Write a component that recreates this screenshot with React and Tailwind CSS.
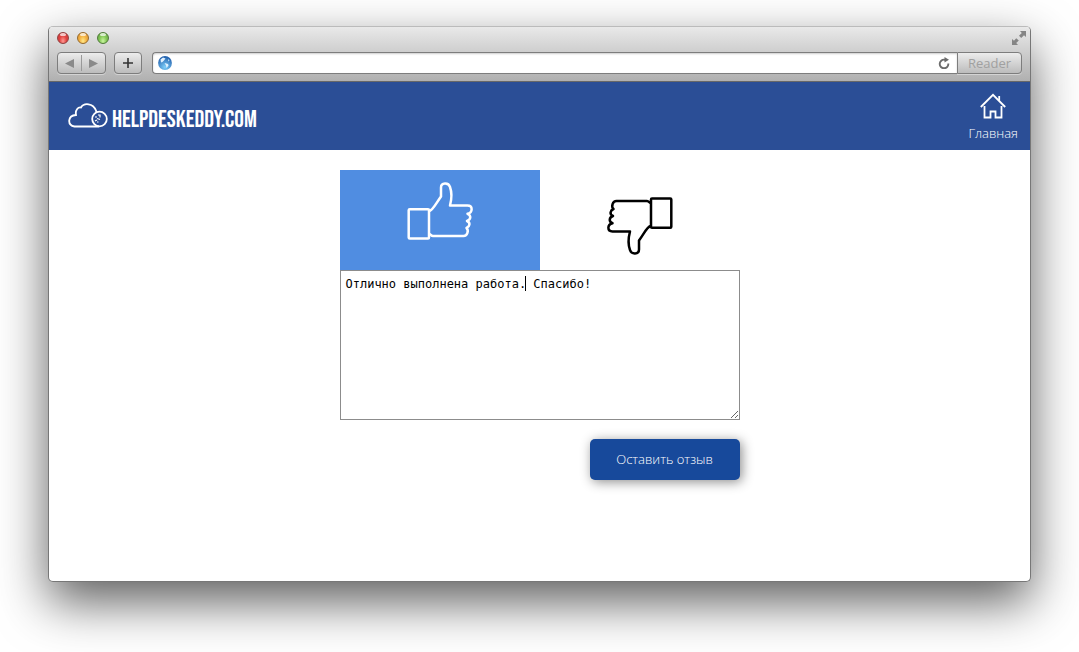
import { useState } from 'react';

const lights = [
  { name: 'Close', color: 'border-[#8f3f3f] bg-radial-[at_50%_80%] from-[#ff9a94] via-[#e0413f] to-[#c93a3a]' },
  { name: 'Minimize', color: 'border-[#94692c] bg-radial-[at_50%_80%] from-[#ffe98a] via-[#f3b040] to-[#dd9434]' },
  { name: 'Zoom', color: 'border-[#4f7a3a] bg-radial-[at_50%_80%] from-[#c9f5a0] via-[#83c755] to-[#65a344]' },
];

const chromeButton = 'border border-[#7d7d7d] bg-linear-to-b from-[#ececec] to-[#bcbcbc] shadow-[0_1px_0_rgba(255,255,255,0.4)]';

function ThumbIcon({ className }) {
  return (
    <svg viewBox="0 0 66 58" width="66" height="58" fill="none" stroke="currentColor" strokeWidth="2.5" strokeLinejoin="round" strokeLinecap="round" className={className}>
      <rect x="1.7" y="27.2" width="20.300" height="29.200" rx="1" />
      <path d="M22.500 29 C26 28 28 23 34 14.500 V5.500 C34 0.500 41.500 0.200 43 5 C45 10.500 45 16 43 23.500 H60.500 C66 23.500 66 30.500 60.500 31.800 C64.500 33.500 64 37.500 60 39 C63.800 40.500 62.800 44.500 59.500 46 C62 48.500 60.500 54 56.500 54 H26 C24.500 54 23.500 52.500 22.500 52" />
    </svg>
  );
}

function CloudLogo() {
  return (
    <svg viewBox="0 0 40 26" width="40" height="26" fill="none" stroke="white" strokeWidth="1.8" aria-hidden="true">
      <path d="M31 23.500 H6.500 C-1 22 -0.500 12.500 8 12 C7 7 10 4 13 4.500 C16 -0.500 25 0 28 7.500 L28.500 9.500" />
      <circle cx="31.500" cy="16" r="7.300" />
      <path d="M27 14 h2 M30 12 h1.500 M27 18 l2 -1 M29 15.500 l3 1 M32 14.500 v-3 M29 19 h1.500" strokeWidth="1.200" />
    </svg>
  );
}

function HomeIcon() {
  return (
    <svg viewBox="0 0 26 26" width="26" height="26" fill="none" stroke="white" strokeWidth="1.800" aria-hidden="true">
      <path d="M0.800 14 L13 1.800 L25.200 14" />
      <path d="M19.200 7.500 V3" />
      <path d="M4.500 13 V24.500 H10.500 V18.500 H15.500 V24.500 H21.500 V13" />
    </svg>
  );
}

function Globe() {
  return (
    <svg viewBox="0 0 14 14" width="14" height="14" className="flex-none" aria-hidden="true">
      <defs>
        <radialGradient id="globe" cx="50%" cy="80%" r="75%">
          <stop offset="0" stopColor="#7fd0fb" />
          <stop offset="1" stopColor="#2361ad" />
        </radialGradient>
      </defs>
      <circle cx="7" cy="7" r="6.900" fill="url(#globe)" />
      <path d="M2.500 3.500 L5 1.500 L7.500 2.500 L6 4.500 L4.500 6 L3 6.500 Z M6.500 7 L10 8 L10.500 9.500 L8.500 12 L8 9.500 Z M10 3 L11.500 4.500 L10.500 5.500 Z" fill="#e0f1ff" />
    </svg>
  );
}

function BrowserBar() {
  return (
    <div className="rounded-t-[4px] border-b border-[#686868] bg-linear-to-b from-[#e9e9e9] to-[#b0b0b0] px-2 pt-[5px] pb-[7px]">
      <div className="flex h-3 items-center justify-between">
        <div className="flex gap-2">
          {lights.map(({ name, color }) => (
            <button key={name} type="button" aria-label={name} className={`relative h-3 w-3 overflow-hidden rounded-full border ${color}`}>
              <span className="absolute inset-x-[2px] top-0 h-[3px] rounded-full bg-white/70" />
            </button>
          ))}
        </div>
        <button type="button" aria-label="Full screen" className="-mr-1 text-[#858585]">
          <svg viewBox="0 0 14 14" width="14" height="14" fill="currentColor">
            <path d="M8 0 H14 V6 L12 4.200 L9.200 7 L7 4.800 L9.800 2 Z" />
            <path d="M6 14 H0 V8 L2 9.800 L4.200 7.200 L6.800 9.600 L4.200 12 Z" />
          </svg>
        </button>
      </div>

      <div className="mt-2 flex h-[22px]">
        <div className={`flex w-[49px] items-center rounded-[4px] text-[#8a8a8a] ${chromeButton}`}>
          <button type="button" aria-label="Back" className="flex flex-1 justify-center">
            <svg viewBox="0 0 8 8" width="9" height="9" fill="currentColor"><path d="M0 4 L8 0 V8 Z" /></svg>
          </button>
          <span className="h-4 w-px bg-[#999]" />
          <button type="button" aria-label="Forward" className="flex flex-1 justify-center">
            <svg viewBox="0 0 8 8" width="9" height="9" fill="currentColor"><path d="M8 4 L0 0 V8 Z" /></svg>
          </button>
        </div>
        <button type="button" aria-label="Add" className={`ml-2 flex w-7 items-center justify-center rounded-[4px] ${chromeButton}`}>
          <svg viewBox="0 0 10 10" width="10" height="10" stroke="#333" strokeWidth="1.600"><path d="M5 0 V10 M0 5 H10" /></svg>
        </button>
        <div className="ml-[10px] flex min-w-0 flex-1 items-center rounded-l-[4px] border border-r-0 border-[#7d7d7d] bg-white px-[5px] pr-[7px] shadow-[inset_0_1px_2px_rgba(0,0,0,0.2)]">
          <Globe />
          <input type="text" aria-label="Address" className="min-w-0 flex-1 bg-transparent px-2 text-xs outline-none" />
          <button type="button" aria-label="Reload" className="text-[#6c6c6c]">
            <svg viewBox="0 0 12 12" width="12" height="12" fill="none" stroke="currentColor" strokeWidth="1.900">
              <path d="M10.300 6.500 A4.300 4.300 0 1 1 6.500 2.700 L7.500 2.700" />
              <path d="M6.500 0 L11 2.800 L6.500 5.600 Z" fill="currentColor" stroke="none" />
            </svg>
          </button>
        </div>
        <button type="button" className={`w-[65px] rounded-r-[4px] font-['Open_Sans',sans-serif] text-[13px] leading-5 text-[#a0a0a0] ${chromeButton}`}>
          Reader
        </button>
      </div>
    </div>
  );
}

export default function App() {
  const [vote, setVote] = useState('up');
  const [text, setText] = useState('Отлично выполнена работа. Спасибо!');

  return (
    <div className="flex min-h-screen flex-col overflow-hidden bg-white px-12 pt-[26px] pb-[70px] font-['Open_Sans',sans-serif]">
      <div className="flex flex-1 flex-col rounded-[5px] border border-[#777] border-t-[#bbb] bg-white shadow-[0_20px_50px_rgba(0,0,0,0.63)]">
        <BrowserBar />

        <header className="flex h-[68px] items-center justify-between bg-[#2b4e96] pr-3 pl-[19px] text-white">
          <a href="#" className="flex items-center gap-1">
            <CloudLogo />
            <span className="mt-2 font-['Bebas_Neue','Roboto_Condensed','Liberation_Sans_Narrow',sans-serif] text-2xl leading-5">HELPDESKEDDY.COM</span>
          </a>
          <a href="#" className="flex flex-col items-center gap-1 pt-1 text-[13px] leading-5 font-light">
            <HomeIcon />
            Главная
          </a>
        </header>

        <main className="flex-1 px-4 py-5">
          <form className="mx-auto max-w-[400px]" onSubmit={(e) => e.preventDefault()}>
            <div className="grid h-[100px] grid-cols-2">
              <button
                type="button"
                aria-label="Нравится"
                aria-pressed={vote === 'up'}
                onClick={() => setVote('up')}
                className={`flex items-start justify-center pt-3 ${vote === 'up' ? 'bg-[#508de1] text-white' : 'text-black'}`}
              >
                <ThumbIcon />
              </button>
              <button
                type="button"
                aria-label="Не нравится"
                aria-pressed={vote === 'down'}
                onClick={() => setVote('down')}
                className={`flex items-end justify-center pb-[15px] ${vote === 'down' ? 'bg-[#508de1] text-white' : 'text-black'}`}
              >
                <ThumbIcon className="rotate-180" />
              </button>
            </div>

            <div className="relative">
              <textarea
                aria-label="Отзыв"
                value={text}
                onChange={(e) => setText(e.target.value)}
                className="block h-[150px] w-full resize border border-[#8c8c8c] bg-white p-[5px] font-['DejaVu_Sans_Mono',monospace] text-xs leading-4 text-black outline-none"
              />
              <span className="pointer-events-none absolute top-[6px] left-[185px] h-[15px] w-px bg-black" />
            </div>

            <div className="mt-[19px] flex justify-end">
              <button type="submit" className="h-[41px] w-[150px] rounded-[5px] bg-[#17499b] text-[13px] font-light text-white shadow-[2px_2px_12px_rgba(0,0,0,0.45)]">
                Оставить отзыв
              </button>
            </div>
          </form>
        </main>
      </div>
    </div>
  );
}
